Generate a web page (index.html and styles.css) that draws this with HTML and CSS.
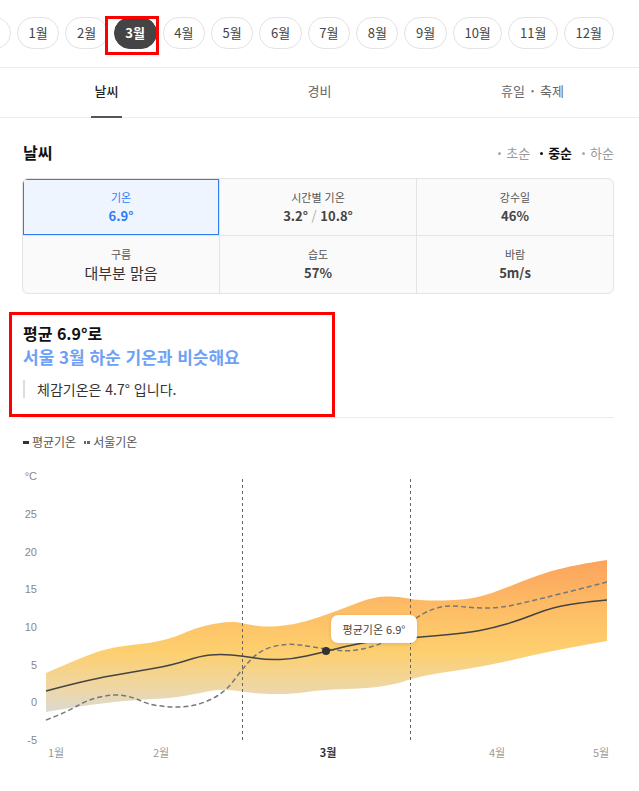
FILE: index.html
```html
<!DOCTYPE html>
<html lang="ko">
<head>
    <meta charset="UTF-8">
    <meta name="viewport" content="width=device-width, initial-scale=1.0">
    <title>3월 날씨</title>
    <link rel="stylesheet" href="styles.css">
</head>
<body>
    <div class="months">
        <div class="month-track">
            <span class="chip chip-edge"></span>
            <span class="chip">1월</span>
            <span class="chip">2월</span>
            <span class="chip chip-active highlight">3월</span>
            <span class="chip">4월</span>
            <span class="chip">5월</span>
            <span class="chip">6월</span>
            <span class="chip">7월</span>
            <span class="chip">8월</span>
            <span class="chip">9월</span>
            <span class="chip">10월</span>
            <span class="chip">11월</span>
            <span class="chip">12월</span>
        </div>
    </div>

    <nav class="tabs">
        <a class="tab tab-active">날씨</a>
        <a class="tab">경비</a>
        <a class="tab">휴일 <span class="dot-sep">•</span> 축제</a>
    </nav>

    <section class="weather">
        <div class="weather-head">
            <h3>날씨</h3>
            <div class="periods">
                <span class="period">초순</span>
                <span class="period period-active">중순</span>
                <span class="period">하순</span>
            </div>
        </div>

        <div class="stats">
            <div class="stat stat-active">
                <div class="stat-label">기온</div>
                <div class="stat-value">6.9°</div>
            </div>
            <div class="stat">
                <div class="stat-label">시간별 기온</div>
                <div class="stat-value">3.2° <span class="slash">/</span> 10.8°</div>
            </div>
            <div class="stat">
                <div class="stat-label">강수일</div>
                <div class="stat-value">46%</div>
            </div>
            <div class="stat">
                <div class="stat-label">구름</div>
                <div class="stat-value stat-text">대부분 맑음</div>
            </div>
            <div class="stat">
                <div class="stat-label">습도</div>
                <div class="stat-value">57%</div>
            </div>
            <div class="stat">
                <div class="stat-label">바람</div>
                <div class="stat-value">5m/s</div>
            </div>
        </div>

        <div class="summary-wrap">
            <div class="summary highlight-box">
                <p class="summary-title">평균 6.9°로</p>
                <p class="summary-sub">서울 3월 하순 기온과 비슷해요</p>
                <p class="summary-note">체감기온은 4.7° 입니다.</p>
            </div>
        </div>

        <div class="legend">
            <span class="legend-item"><i class="mark-solid"></i>평균기온</span>
            <span class="legend-item"><i class="mark-dots"></i>서울기온</span>
        </div>
    </section>

    <div class="chart">
        <svg class="chart-svg" width="639" height="305" viewBox="0 465 639 305">
            <defs>
                <linearGradient id="band" gradientUnits="userSpaceOnUse" x1="0" y1="560" x2="0" y2="712">
                    <stop offset="0" stop-color="#fca35d"/>
                    <stop offset="0.35" stop-color="#fdbf66"/>
                    <stop offset="0.6" stop-color="#fdcf6e"/>
                    <stop offset="0.85" stop-color="#eed7a6"/>
                    <stop offset="1" stop-color="#dbd9d3"/>
                </linearGradient>
            </defs>

            <g class="axis-y">
                <text x="37" y="480">°C</text>
                <text x="37" y="518">25</text>
                <text x="37" y="556">20</text>
                <text x="37" y="593">15</text>
                <text x="37" y="631">10</text>
                <text x="37" y="669">5</text>
                <text x="37" y="706">0</text>
                <text x="37" y="744">-5</text>
            </g>

            <path fill="url(#band)" d="M 46 673 Q 87 655 100 651 Q 113 647 131.5 645 Q 150 643 161.5 640.5 Q 173 638 186.5 632 Q 200 626 216.5 623.5 Q 233 621 241.5 623 Q 250 625 258.5 626 Q 267 627 280 626 Q 293 625 306.5 621 Q 320 617 333.5 612 Q 347 607 360 602 Q 373 597 385 596.5 Q 397 596 408.5 598.5 Q 420 601 443.5 600.5 Q 467 600 480 596.5 Q 493 593 506.5 587.5 Q 520 582 536.5 576 Q 553 570 570 566.5 Q 587 563 597 561.5 L 607 560 L 607 641 Q 573 647 553 651 Q 533 655 516.5 659 Q 500 663 483.5 666 Q 467 669 450 671.5 Q 433 674 421.5 676.5 Q 410 679 405 681 Q 400 683 386.5 685.5 Q 373 688 346.5 689 Q 320 690 306.5 692 Q 293 694 276.5 694 Q 260 694 250 692.5 Q 240 691 230 690 Q 220 689 210 691 Q 200 693 186.5 695.5 Q 173 698 153 699 Q 133 700 110 702.5 Q 87 705 66.5 708.5 L 46 712 Z"/>

            <line class="guide" x1="242.5" y1="479" x2="242.5" y2="741"/>
            <line class="guide" x1="410.5" y1="479" x2="410.5" y2="741"/>

            <path class="line-seoul" d="M 46 720 Q 67 712 77 706 Q 87 700 100 697 Q 113 694 123 695.5 Q 133 697 140 700.5 Q 147 704 157 705.5 Q 167 707 177 707 Q 187 707 197 704.5 Q 207 702 217 696 Q 227 690 235 679 Q 243 668 251.5 659 Q 260 650 273.5 646.5 Q 287 643 300 645 Q 313 647 330 649.5 Q 347 652 360 649.5 Q 373 647 383 642.5 Q 393 638 403 629 Q 413 620 420 615.5 Q 427 611 437 608 Q 447 605 460 606.5 Q 473 608 486.5 608 Q 500 608 513.5 605 Q 527 602 543.5 598 Q 560 594 583.5 588 L 607 582"/>

            <path class="line-avg" d="M 46 691 Q 87 680 110 676 Q 133 672 153 668.5 Q 173 665 186.5 660.5 Q 200 656 210 655 Q 220 654 231.5 655 Q 243 656 255 658 Q 267 660 280 659.5 Q 293 659 306.5 656 Q 320 653 333.5 649.5 Q 347 646 360 643.5 Q 373 641 391.5 639.5 Q 410 638 438.5 635.5 Q 467 633 480 630.5 Q 493 628 506.5 624 Q 520 620 536.5 613.5 Q 553 607 570 604.5 Q 587 602 597 601 L 607 600"/>

            <circle cx="326" cy="651" r="4" fill="#333"/>

            <g class="axis-x">
                <text x="56" y="757">1월</text>
                <text x="161" y="757">2월</text>
                <text x="328" y="757" class="axis-current">3월</text>
                <text x="497" y="757">4월</text>
                <text x="601" y="757">5월</text>
            </g>
        </svg>
        <div class="tooltip">평균기온 6.9°</div>
    </div>
</body>
</html>
```

FILE: styles.css
```css
:root {
    --text-color: #333;
    --muted: #777;
    --line: #ececec;
    --blue: #2f7cf6;
}

* {
    box-sizing: border-box;
    margin: 0;
    padding: 0;
}

body {
    font-family: 'Noto Sans CJK KR', 'Noto Sans', sans-serif;
    color: var(--text-color);
    background: white;
    width: 639px;
    overflow: hidden;
}

/* month chips */
.months {
    overflow: hidden;
    padding: 17px 0 18px;
    border-bottom: 1px solid var(--line);
}

.month-track {
    display: flex;
    gap: 6px;
    margin-left: -31px;
}

.chip {
    flex: none;
    position: relative;
    height: 32px;
    line-height: 30px;
    padding: 0 10.6px;
    border: 1px solid #e3e3e3;
    border-radius: 16px;
    font-size: 13px;
    color: #444;
    white-space: nowrap;
}

.chip-edge {
    width: 42px;
}

.chip-active {
    background-color: #444;
    border-color: #444;
    color: white;
    font-weight: bold;
}

/* red annotation boxes */
.highlight::after {
    content: "";
    position: absolute;
    left: -10px;
    right: -3px;
    top: -2px;
    bottom: -7px;
    border: 3px solid #f00;
}

.highlight-box {
    border: 3px solid #f00;
}

/* tabs */
.tabs {
    display: grid;
    grid-template-columns: 1fr 1fr 1fr;
    border-bottom: 1px solid var(--line);
}

.tab {
    height: 49px;
    padding-bottom: 4px;
    display: flex;
    align-items: center;
    justify-content: center;
    font-size: 13px;
    color: #666;
    position: relative;
}

.tab-active {
    color: #222;
    font-weight: 500;
}

.tab-active::after {
    content: "";
    position: absolute;
    bottom: -1px;
    left: 50%;
    width: 31px;
    margin-left: -16px;
    height: 2px;
    background-color: #555;
}

.dot-sep {
    margin: 0 6px;
    font-size: 9px;
    color: #777;
}

/* weather */
.weather {
    padding: 22px 25px 0 22px;
}

.weather-head {
    display: flex;
    justify-content: space-between;
    align-items: center;
    margin-bottom: 14px;
}

.weather-head h3 {
    font-size: 16px;
    font-weight: bold;
    color: #111;
    line-height: 24px;
    padding-left: 1px;
}

.periods {
    display: flex;
    gap: 10px;
    font-size: 13px;
    color: #999;
}

.period::before {
    content: "";
    display: inline-block;
    width: 3px;
    height: 3px;
    border-radius: 50%;
    background-color: #aaa;
    vertical-align: middle;
    margin-right: 5px;
}

.period-active {
    color: #111;
    font-weight: bold;
}

.period-active::before {
    background-color: #111;
}

.stats {
    display: grid;
    grid-template-columns: 197px 197px 1fr;
    border: 1px solid #e4e4e4;
    border-radius: 6px;
    background-color: #fafafa;
    overflow: hidden;
}

.stat {
    height: 57px;
    padding-top: 10px;
    text-align: center;
    border-right: 1px solid #e4e4e4;
    border-bottom: 1px solid #e4e4e4;
}

.stat:nth-child(3n) {
    border-right: none;
}

.stat:nth-child(n+4) {
    border-bottom: none;
}

.stat-label {
    font-size: 11px;
    line-height: 17px;
    color: #555;
}

.stat-value {
    font-size: 13px;
    line-height: 20px;
    font-weight: bold;
    color: #444;
}

.stat-text {
    font-size: 15px;
    font-weight: normal;
    color: #333;
}

.slash {
    font-weight: normal;
    color: #aaa;
}

.stat-active {
    background-color: #eef5ff;
    box-shadow: inset 0 0 0 1px var(--blue);
}

.stat-active .stat-label,
.stat-active .stat-value {
    color: var(--blue);
}

/* summary */
.summary-wrap {
    margin-top: 18px;
    border-bottom: 1px solid var(--line);
}

.summary {
    margin-left: -13px;
    width: 326px;
    padding: 7px 11px 16px;
}

.summary-title {
    font-size: 16px;
    font-weight: bold;
    line-height: 22px;
    color: #111;
}

.summary-sub {
    font-size: 17px;
    font-weight: bold;
    line-height: 25px;
    color: #6ea1f6;
}

.summary-note {
    margin-top: 11px;
    font-size: 14px;
    line-height: 18px;
    color: #333;
    border-left: 2px solid #ddd;
    padding-left: 12px;
}

.legend {
    display: flex;
    gap: 8px;
    padding: 15px 0 0 1px;
    font-size: 12px;
    line-height: 18px;
    color: #555;
}

.legend-item {
    display: flex;
    align-items: center;
}

.mark-solid {
    width: 6px;
    height: 3px;
    background-color: #333;
    margin-right: 3px;
}

.mark-dots {
    width: 6px;
    height: 3px;
    margin-right: 3px;
    background: linear-gradient(90deg, #666 0 2.5px, transparent 2.5px 3.5px, #666 3.5px 6px);
}

/* chart */
.chart {
    position: relative;
    margin-top: 14px;
}

.chart-svg {
    display: block;
}

.axis-y text {
    font-size: 11px;
    fill: #888;
    text-anchor: end;
    font-family: 'Liberation Sans', sans-serif;
}

.axis-x text {
    font-size: 11px;
    fill: #999;
    text-anchor: middle;
}

.axis-x .axis-current {
    fill: #333;
    font-weight: bold;
}

.guide {
    stroke: #666;
    stroke-width: 1;
    stroke-dasharray: 3 3;
}

.line-avg {
    fill: none;
    stroke: #444;
    stroke-width: 1.5;
}

.line-seoul {
    fill: none;
    stroke: #777;
    stroke-width: 1.5;
    stroke-dasharray: 5 3;
}

.tooltip {
    position: absolute;
    left: 331px;
    top: 150px;
    width: 86px;
    height: 28px;
    line-height: 28px;
    text-align: center;
    font-size: 11px;
    color: #444;
    background-color: white;
    border-radius: 7px;
    box-shadow: 0 1px 4px rgba(0, 0, 0, 0.12);
}
```
